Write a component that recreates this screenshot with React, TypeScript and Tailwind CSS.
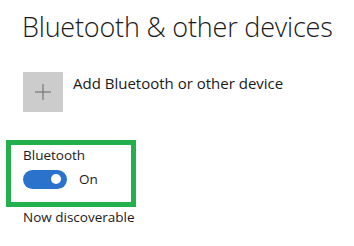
export default function App() {
  return (
    <div
      className="w-[354px] h-[246px] bg-white text-[#1a1a1a] overflow-hidden pl-[6px]"
      style={{ fontFamily: '"Open Sans", "Noto Sans", sans-serif' }}
    >
      <h1 className="ml-[16px] mt-[10px] text-[27px] font-light leading-[34px] tracking-[-0.2px]">
        Bluetooth &amp; other devices
      </h1>

      <div className="ml-[17px] mt-[28px] flex items-start gap-[10px]">
        <div className="w-[40px] h-[40px] bg-[#cccccc] flex items-center justify-center">
          <svg width="16" height="16" viewBox="0 0 16 16">
            <path d="M8 0v16M0 8h16" stroke="#666" strokeWidth="1" />
          </svg>
        </div>
        <span className="text-[15px] leading-[20px] pt-[1px]">Add Bluetooth or other device</span>
      </div>

      <div className="mt-[28px] w-[130px] h-[67px] border-[5px] border-[#22b14c] pl-[12px]">
        <div className="text-[13.5px] leading-[20px]">Bluetooth</div>
        <div className="mt-[4px] flex items-center gap-[12px]">
          <div className="w-[44px] h-[19px] rounded-full bg-[#2b72cc] flex items-center justify-end pr-[6px]">
            <div className="w-[10px] h-[10px] rounded-full bg-white" />
          </div>
          <span className="text-[13.5px] leading-[20px]">On</span>
        </div>
      </div>

      <div className="ml-[17px] mt-0 text-[13.5px] leading-[20px]">Now discoverable</div>
    </div>
  );
}
